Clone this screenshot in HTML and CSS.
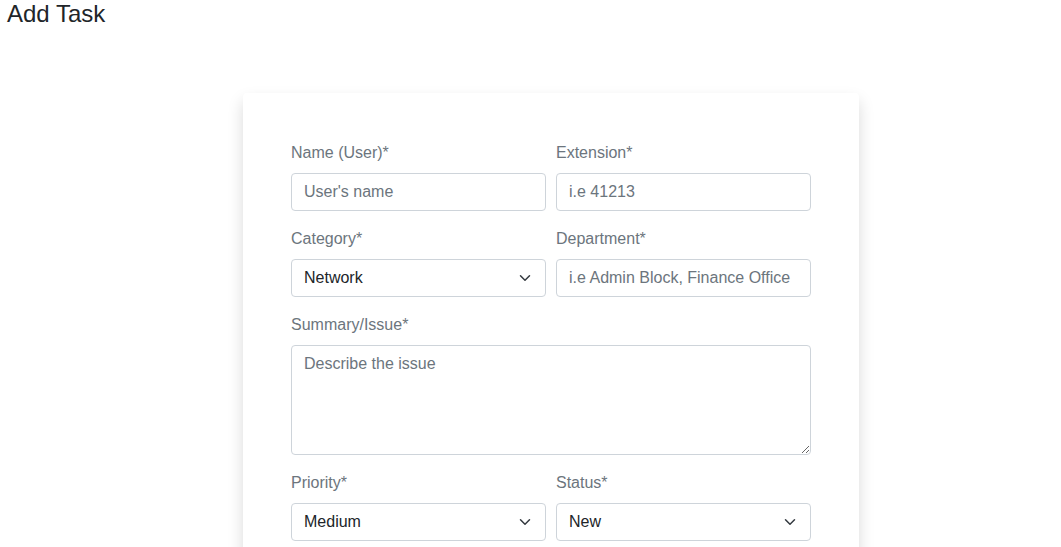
FILE: index.html
```html
<!DOCTYPE html>
<html>
<head>
<meta charset="utf-8">
<link rel="stylesheet" href="styles.css">
</head>
<body>
<h1 class="page-title">Add Task</h1>
<div class="card">
  <form class="form-grid">
    <div class="field">
      <label class="label">Name (User)*</label>
      <input class="control" type="text" placeholder="User's name">
    </div>
    <div class="field">
      <label class="label">Extension*</label>
      <input class="control" type="text" placeholder="i.e 41213">
    </div>
    <div class="field">
      <label class="label">Category*</label>
      <div class="select">Network<svg class="chev" width="16" height="12" viewBox="0 0 16 16"><path d="M2 5l6 6 6-6" fill="none" stroke="#343a40" stroke-width="2" stroke-linecap="round" stroke-linejoin="round"/></svg></div>
    </div>
    <div class="field">
      <label class="label">Department*</label>
      <input class="control" type="text" placeholder="i.e Admin Block, Finance Office">
    </div>
    <div class="field full">
      <label class="label">Summary/Issue*</label>
      <textarea class="control area" placeholder="Describe the issue"></textarea>
    </div>
    <div class="field">
      <label class="label">Priority*</label>
      <div class="select">Medium<svg class="chev" width="16" height="12" viewBox="0 0 16 16"><path d="M2 5l6 6 6-6" fill="none" stroke="#343a40" stroke-width="2" stroke-linecap="round" stroke-linejoin="round"/></svg></div>
    </div>
    <div class="field">
      <label class="label">Status*</label>
      <div class="select">New<svg class="chev" width="16" height="12" viewBox="0 0 16 16"><path d="M2 5l6 6 6-6" fill="none" stroke="#343a40" stroke-width="2" stroke-linecap="round" stroke-linejoin="round"/></svg></div>
    </div>
  </form>
</div>
</body>
</html>
```
FILE: styles.css
```css
html, body {
  margin: 0;
  padding: 0;
  background: #fff;
  font-family: "Liberation Sans", Arial, sans-serif;
  color: #212529;
}
.page-title {
  margin: 0;
  padding-left: 7px;
  font-size: 24px;
  font-weight: 400;
  line-height: 28.8px;
}
.card {
  margin: 64px 0 0 243px;
  width: 616px;
  box-sizing: border-box;
  padding: 48px 48px 48px;
  background: #fff;
  border-radius: 4px;
  box-shadow: 0 8px 16px rgba(0, 0, 0, 0.15);
}
.form-grid {
  display: grid;
  grid-template-columns: 255px 255px;
  column-gap: 10px;
  row-gap: 16px;
}
.field {
  display: flex;
  flex-direction: column;
}
.field.full {
  grid-column: 1 / 3;
}
.label {
  font-size: 16px;
  line-height: 24px;
  color: #6c757d;
  margin-bottom: 8px;
}
.control {
  box-sizing: border-box;
  height: 38px;
  width: 100%;
  padding: 6px 12px;
  border: 1px solid #ced4da;
  border-radius: 4px;
  font-family: "Liberation Sans", Arial, sans-serif;
  font-size: 16px;
  line-height: 24px;
  color: #212529;
  background: #fff;
  outline: none;
}
.control::placeholder {
  color: #6c757d;
  opacity: 1;
}
.area {
  height: 110px;
  resize: vertical;
}
.select {
  box-sizing: border-box;
  height: 38px;
  padding: 6px 12px;
  border: 1px solid #ced4da;
  border-radius: 4px;
  font-size: 16px;
  line-height: 24px;
  color: #212529;
  display: flex;
  align-items: center;
  justify-content: space-between;
}
.chev {
  display: block;
}
```
